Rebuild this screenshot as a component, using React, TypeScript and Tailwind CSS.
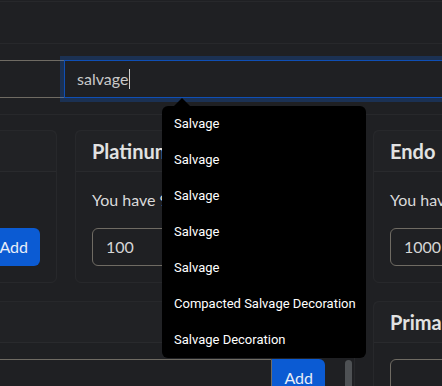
import React from "react";

type Card = { title: string; have: string; value: string };

const cards: Card[] = [
  { title: "Credits", have: "You have 250,000 Credits", value: "10000" },
  { title: "Platinum", have: "You have 9,999 Platinum", value: "100" },
  { title: "Endo", have: "You have 12,000 Endo", value: "1000" },
];

const suggestions = [
  "Salvage",
  "Salvage",
  "Salvage",
  "Salvage",
  "Salvage",
  "Compacted Salvage Decoration",
  "Salvage Decoration",
];

function InputGroup({ value }: { value?: string }) {
  return (
    <div className="flex h-[38px]">
      <div className="flex flex-1 items-center rounded-l-md border border-[#6f6b63] px-[13px] text-[16px] text-[#d6d6d6]">
        {value}
      </div>
      <button className="rounded-r-md bg-[#0b5bd3] px-3 text-[16px] text-[#e8eef8]">
        Add
      </button>
    </div>
  );
}

function CardHeader({ title }: { title: string }) {
  return (
    <div className="border-b border-white/[0.035] bg-white/[0.01] px-4 py-2">
      <h5 className="whitespace-nowrap text-[20px] font-bold leading-6 text-[#e2e2e2]">
        {title}
      </h5>
    </div>
  );
}

function ResourceCard({ card }: { card: Card }) {
  return (
    <div className="rounded-md border border-white/[0.035]">
      <CardHeader title={card.title} />
      <div className="p-4">
        <p className="mb-4 whitespace-nowrap text-[16px] leading-6 text-[#dadada]">
          {card.have}
        </p>
        <InputGroup value={card.value} />
      </div>
    </div>
  );
}

export default function App() {
  return (
    <div className="relative h-[386px] w-[442px] overflow-hidden bg-[#1f2023] font-['Lato',sans-serif]">
      {/* Header strip */}
      <div className="mt-px h-[42px] border-t border-white/[0.04]" />

      {/* Search row */}
      <div className="flex border-y border-white/[0.04] py-4">
        <div className="h-[38px] w-[64px] shrink-0 border-y border-[#6f6b63]" />
        <div className="-mr-10 flex h-[38px] flex-1 items-center border border-[#0f4fb5] pl-[12px] text-[16px] text-[#c9c9c9] shadow-[0_0_0_4px_rgba(13,110,253,0.22)]">
          salvage
          <span className="ml-px h-[20px] w-px bg-[#d0d0d0]" />
        </div>
      </div>

      {/* Cards */}
      <div className="-ml-[223px] mt-[15px] grid grid-cols-[280px_280px_280px] gap-[18px]">
        {cards.map((c) => (
          <ResourceCard key={c.title} card={c} />
        ))}

        <div className="col-span-2 rounded-md border border-white/[0.035]">
          <CardHeader title="Items" />
          <div className="flex pl-4 pr-[2px] pt-4">
            <div className="flex-1">
              <InputGroup />
            </div>
            <div className="ml-5 mt-px h-[40px] w-[7px] rounded-full bg-[#4e5154]" />
          </div>
        </div>

        <div className="rounded-md border border-white/[0.035]">
          <CardHeader title="Primary Weapons" />
          <div className="p-4">
            <InputGroup />
          </div>
        </div>
      </div>

      {/* Suggestion dropdown */}
      <div className="absolute left-[162px] top-[106px] w-[204px] rounded-md bg-black font-['Roboto',sans-serif]">
        <div className="absolute -top-[8px] left-[12px] h-0 w-0 border-x-[8px] border-b-[8px] border-x-transparent border-b-black" />
        {suggestions.map((s, i) => (
          <div
            key={i}
            className="flex h-9 items-center whitespace-nowrap px-3 text-[13px] text-white"
          >
            {s}
          </div>
        ))}
      </div>
    </div>
  );
}
